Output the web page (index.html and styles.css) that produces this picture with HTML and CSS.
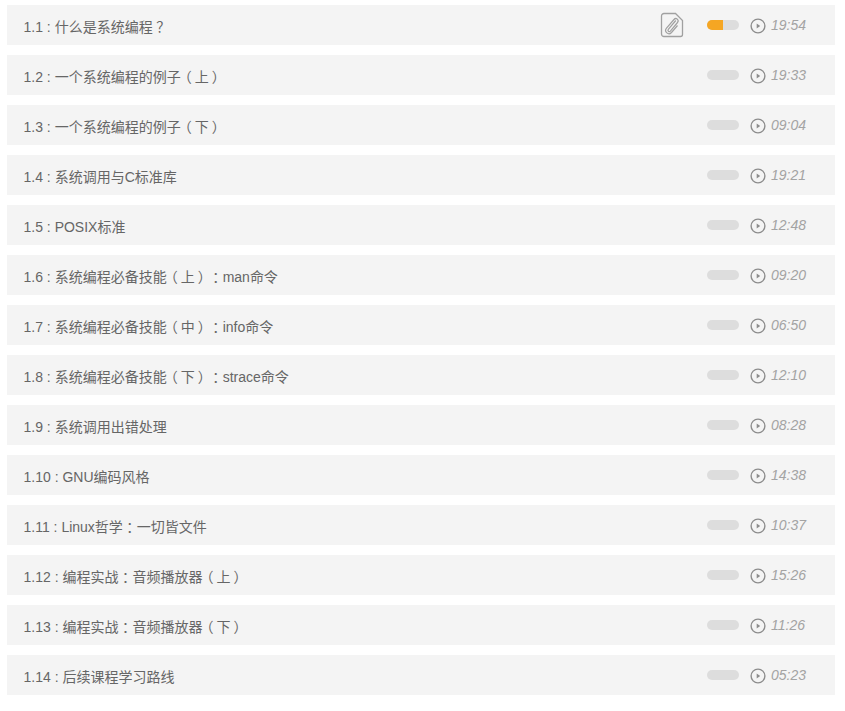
FILE: index.html
```html
<!DOCTYPE html>
<html lang="zh-CN">
<head>
  <meta charset="UTF-8" />
  <meta name="viewport" content="width=device-width, initial-scale=1" />
  <title>课程目录</title>
  <link rel="stylesheet" href="styles.css">
</head>
<body>
  <ul class="lesson-list">
    <li class="lesson">
      <span class="lesson-title">1.1 : 什么是系统编程<span class="punct">？</span></span>
      <svg class="attach-icon" width="24" height="26" viewBox="0 0 24 26" fill="none" stroke="#a0a0a0" aria-hidden="true">
        <path d="M4 1.500h11.500l7 7V22.500a2 2 0 0 1-2 2H4a2.500 2.500 0 0 1-2.500-2.500V4A2.500 2.500 0 0 1 4 1.500z" stroke-width="1.300"/>
        <path d="M15.800 8.500 8.300 17.300c-1.100 1.400.8 3.100 2.100 1.800l7.100-8.600c2-2.500-1.400-5.400-3.500-3L6.500 16.200c-2.800 3.500 2 7.500 5 4.300l6-7" stroke-width="1.200"/>
      </svg>
      <span class="progress"><span class="progress-fill progress-half"></span></span>
      <svg class="play-icon" width="16" height="16" viewBox="0 0 16 16" aria-hidden="true">
        <circle cx="8" cy="8" r="6.900" fill="none" stroke="#8c8c8c" stroke-width="1.400"/>
        <path d="M6.700 5.600 10.200 8l-3.500 2.400z" fill="#8c8c8c"/>
      </svg>
      <span class="lesson-time">19:54</span>
    </li>
    <li class="lesson">
      <span class="lesson-title">1.2 : 一个系统编程的例子<span class="punct">（</span>上<span class="punct">）</span></span>
      <span class="progress"></span>
      <svg class="play-icon" width="16" height="16" viewBox="0 0 16 16" aria-hidden="true">
        <circle cx="8" cy="8" r="6.900" fill="none" stroke="#8c8c8c" stroke-width="1.400"/>
        <path d="M6.700 5.600 10.200 8l-3.500 2.400z" fill="#8c8c8c"/>
      </svg>
      <span class="lesson-time">19:33</span>
    </li>
    <li class="lesson">
      <span class="lesson-title">1.3 : 一个系统编程的例子<span class="punct">（</span>下<span class="punct">）</span></span>
      <span class="progress"></span>
      <svg class="play-icon" width="16" height="16" viewBox="0 0 16 16" aria-hidden="true">
        <circle cx="8" cy="8" r="6.900" fill="none" stroke="#8c8c8c" stroke-width="1.400"/>
        <path d="M6.700 5.600 10.200 8l-3.500 2.400z" fill="#8c8c8c"/>
      </svg>
      <span class="lesson-time">09:04</span>
    </li>
    <li class="lesson">
      <span class="lesson-title">1.4 : 系统调用与C标准库</span>
      <span class="progress"></span>
      <svg class="play-icon" width="16" height="16" viewBox="0 0 16 16" aria-hidden="true">
        <circle cx="8" cy="8" r="6.900" fill="none" stroke="#8c8c8c" stroke-width="1.400"/>
        <path d="M6.700 5.600 10.200 8l-3.500 2.400z" fill="#8c8c8c"/>
      </svg>
      <span class="lesson-time">19:21</span>
    </li>
    <li class="lesson">
      <span class="lesson-title">1.5 : POSIX标准</span>
      <span class="progress"></span>
      <svg class="play-icon" width="16" height="16" viewBox="0 0 16 16" aria-hidden="true">
        <circle cx="8" cy="8" r="6.900" fill="none" stroke="#8c8c8c" stroke-width="1.400"/>
        <path d="M6.700 5.600 10.200 8l-3.500 2.400z" fill="#8c8c8c"/>
      </svg>
      <span class="lesson-time">12:48</span>
    </li>
    <li class="lesson">
      <span class="lesson-title">1.6 : 系统编程必备技能<span class="punct">（</span>上<span class="punct">）</span><span class="punct">：</span>man命令</span>
      <span class="progress"></span>
      <svg class="play-icon" width="16" height="16" viewBox="0 0 16 16" aria-hidden="true">
        <circle cx="8" cy="8" r="6.900" fill="none" stroke="#8c8c8c" stroke-width="1.400"/>
        <path d="M6.700 5.600 10.200 8l-3.500 2.400z" fill="#8c8c8c"/>
      </svg>
      <span class="lesson-time">09:20</span>
    </li>
    <li class="lesson">
      <span class="lesson-title">1.7 : 系统编程必备技能<span class="punct">（</span>中<span class="punct">）</span><span class="punct">：</span>info命令</span>
      <span class="progress"></span>
      <svg class="play-icon" width="16" height="16" viewBox="0 0 16 16" aria-hidden="true">
        <circle cx="8" cy="8" r="6.900" fill="none" stroke="#8c8c8c" stroke-width="1.400"/>
        <path d="M6.700 5.600 10.200 8l-3.500 2.400z" fill="#8c8c8c"/>
      </svg>
      <span class="lesson-time">06:50</span>
    </li>
    <li class="lesson">
      <span class="lesson-title">1.8 : 系统编程必备技能<span class="punct">（</span>下<span class="punct">）</span><span class="punct">：</span>strace命令</span>
      <span class="progress"></span>
      <svg class="play-icon" width="16" height="16" viewBox="0 0 16 16" aria-hidden="true">
        <circle cx="8" cy="8" r="6.900" fill="none" stroke="#8c8c8c" stroke-width="1.400"/>
        <path d="M6.700 5.600 10.200 8l-3.500 2.400z" fill="#8c8c8c"/>
      </svg>
      <span class="lesson-time">12:10</span>
    </li>
    <li class="lesson">
      <span class="lesson-title">1.9 : 系统调用出错处理</span>
      <span class="progress"></span>
      <svg class="play-icon" width="16" height="16" viewBox="0 0 16 16" aria-hidden="true">
        <circle cx="8" cy="8" r="6.900" fill="none" stroke="#8c8c8c" stroke-width="1.400"/>
        <path d="M6.700 5.600 10.200 8l-3.500 2.400z" fill="#8c8c8c"/>
      </svg>
      <span class="lesson-time">08:28</span>
    </li>
    <li class="lesson">
      <span class="lesson-title">1.10 : GNU编码风格</span>
      <span class="progress"></span>
      <svg class="play-icon" width="16" height="16" viewBox="0 0 16 16" aria-hidden="true">
        <circle cx="8" cy="8" r="6.900" fill="none" stroke="#8c8c8c" stroke-width="1.400"/>
        <path d="M6.700 5.600 10.200 8l-3.500 2.400z" fill="#8c8c8c"/>
      </svg>
      <span class="lesson-time">14:38</span>
    </li>
    <li class="lesson">
      <span class="lesson-title">1.11 : Linux哲学<span class="punct">：</span>一切皆文件</span>
      <span class="progress"></span>
      <svg class="play-icon" width="16" height="16" viewBox="0 0 16 16" aria-hidden="true">
        <circle cx="8" cy="8" r="6.900" fill="none" stroke="#8c8c8c" stroke-width="1.400"/>
        <path d="M6.700 5.600 10.200 8l-3.500 2.400z" fill="#8c8c8c"/>
      </svg>
      <span class="lesson-time">10:37</span>
    </li>
    <li class="lesson">
      <span class="lesson-title">1.12 : 编程实战<span class="punct">：</span>音频播放器<span class="punct">（</span>上<span class="punct">）</span></span>
      <span class="progress"></span>
      <svg class="play-icon" width="16" height="16" viewBox="0 0 16 16" aria-hidden="true">
        <circle cx="8" cy="8" r="6.900" fill="none" stroke="#8c8c8c" stroke-width="1.400"/>
        <path d="M6.700 5.600 10.200 8l-3.500 2.400z" fill="#8c8c8c"/>
      </svg>
      <span class="lesson-time">15:26</span>
    </li>
    <li class="lesson">
      <span class="lesson-title">1.13 : 编程实战<span class="punct">：</span>音频播放器<span class="punct">（</span>下<span class="punct">）</span></span>
      <span class="progress"></span>
      <svg class="play-icon" width="16" height="16" viewBox="0 0 16 16" aria-hidden="true">
        <circle cx="8" cy="8" r="6.900" fill="none" stroke="#8c8c8c" stroke-width="1.400"/>
        <path d="M6.700 5.600 10.200 8l-3.500 2.400z" fill="#8c8c8c"/>
      </svg>
      <span class="lesson-time">11:26</span>
    </li>
    <li class="lesson">
      <span class="lesson-title">1.14 : 后续课程学习路线</span>
      <span class="progress"></span>
      <svg class="play-icon" width="16" height="16" viewBox="0 0 16 16" aria-hidden="true">
        <circle cx="8" cy="8" r="6.900" fill="none" stroke="#8c8c8c" stroke-width="1.400"/>
        <path d="M6.700 5.600 10.200 8l-3.500 2.400z" fill="#8c8c8c"/>
      </svg>
      <span class="lesson-time">05:23</span>
    </li>
  </ul>
</body>
</html>
```

FILE: styles.css
```css
body {
  font-family: "Liberation Sans", "Noto Sans CJK SC", sans-serif;
  margin: 0;
  background: white;
}

.lesson-list {
  list-style: none;
  margin: 0;
  padding: 5px 10px 0 7px;
  display: flex;
  flex-direction: column;
  gap: 10px;
}

.lesson {
  display: flex;
  align-items: center;
  height: 40px;
  padding: 0 29px 0 16.500px;
  background: #f4f4f4;
}

.lesson-title {
  flex: 1;
  padding-top: 2px;
  font-size: 14px;
  color: #666;
}

/* full width punctuation sits centred in its box */
.punct {
  display: inline-block;
  width: 14px;
  text-align: center;
  font-feature-settings: "palt";
}

.attach-icon {
  margin-right: 23px;
}

.progress {
  width: 32px;
  height: 10px;
  border-radius: 5px;
  background: #ddd;
  overflow: hidden;
}

.progress-fill {
  display: block;
  height: 100%;
  background: #f5a623;
}

.progress-half {
  width: 50%;
}

.play-icon {
  margin-left: 11px;
  margin-top: 1px;
}

.lesson-time {
  width: 35px;
  margin-left: 5px;
  font-size: 14px;
  font-style: italic;
  color: #a3a3a3;
}
```
